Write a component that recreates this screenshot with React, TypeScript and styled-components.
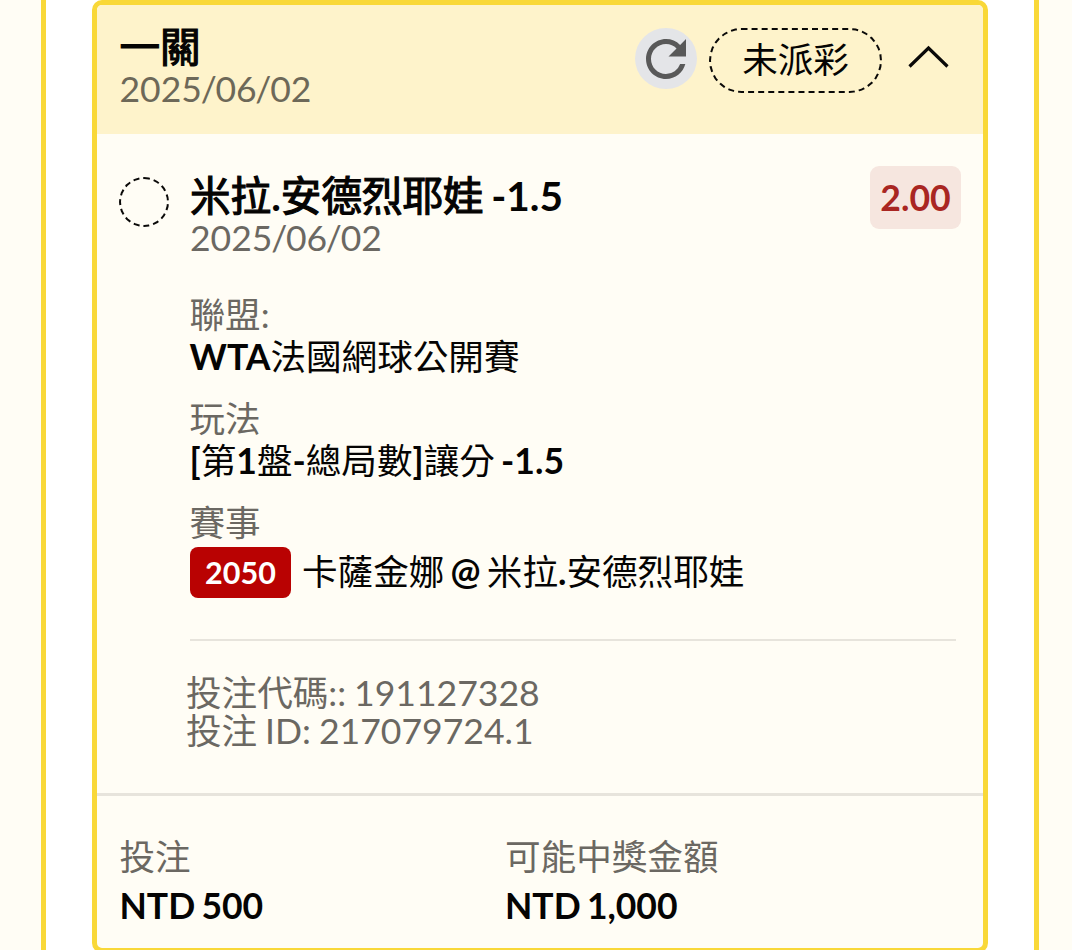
import { Fragment } from "react";
import styled, { createGlobalStyle } from "styled-components";

const GlobalStyle = createGlobalStyle`
  *, *::before, *::after {
    box-sizing: border-box;
  }

  body {
    margin: 0;
    overflow: hidden;
    background: #fffdf5;
    color: #050403;
    font-family: Lato, "Noto Sans CJK TC", sans-serif;
    font-size: 35.6px;
    word-spacing: -2.4px;
  }
`;

const Page = styled.main`
  height: 950px;
  overflow: hidden;
  padding: 0 33px 0 41px;
`;

const Panel = styled.div`
  height: 1000px;
  background: #fff;
  border: 5px solid #f9d838;
  border-width: 0 5px;
  padding: 0 46px;
`;

const Card = styled.article`
  height: 953px;
  background: #fffdf5;
  border: 5px solid #f9d838;
  border-radius: 10px;
  overflow: hidden;
`;

const Header = styled.header`
  display: flex;
  align-items: flex-start;
  height: 129px;
  padding: 20px 33px 0 22.5px;
  background: #fef3cb;
`;

const Title = styled.h2`
  height: 43px;
  margin: 0;
  font-size: 40.6px;
  font-weight: 400;
  line-height: 43px;
  white-space: nowrap;
  -webkit-text-stroke: 1.2px currentColor;
`;

const DateLine = styled.div<{ $tone?: string }>`
  height: 42px;
  font-size: 35.5px;
  line-height: 42px;
  color: ${({ $tone }) => $tone || "#6b6862"};
`;

const Slash = styled.span`
  margin: 0 -1.25px;
`;

const Grow = styled.div`
  flex: 1;
`;

const RefreshButton = styled.button`
  display: flex;
  align-items: center;
  justify-content: center;
  width: 62px;
  height: 61px;
  margin: 3px 12px 0 0;
  padding: 0;
  border: 0;
  border-radius: 50%;
  background: #e4e5e8;
  color: #595959;
`;

const StatusPill = styled.div`
  width: 173px;
  height: 65px;
  margin: 3px 24px 0 0;
  border: 2px dashed #0a0908;
  border-radius: 33px;
  line-height: 60px;
  text-align: center;
`;

const Toggle = styled.button`
  display: flex;
  margin: 18px 0 0;
  padding: 0;
  border: 0;
  background: none;
  color: #0a0908;
`;

const Leg = styled.section`
  display: flex;
  align-items: flex-start;
  height: 659px;
  padding: 32px 22px 0;
`;

const StatusDot = styled.div`
  width: 50px;
  height: 50px;
  margin: 11px 21px 0 0;
  border: 2px dashed #0a0908;
  border-radius: 50%;
`;

const LegBody = styled.div`
  flex: 1;
  min-width: 0;
`;

const LegTop = styled.div`
  display: flex;
  justify-content: space-between;
  height: 128px;
`;

const LegHeading = styled.div`
  padding-top: 7.5px;
`;

const Odds = styled.div`
  width: 91px;
  height: 63px;
  border-radius: 9px;
  background: #f6e6df;
  color: #a92622;
  font-weight: 700;
  line-height: 63px;
  text-align: center;
`;

const Fields = styled.dl`
  display: grid;
  gap: 20px;
  margin: 0 0 0 -0.5px;
`;

const Label = styled.dt`
  height: 42px;
  line-height: 42px;
  color: #6b6862;
`;

const Value = styled.dd`
  height: 42px;
  margin: 0;
  line-height: 42px;
  white-space: nowrap;
`;

const Strong = styled.span`
  font-weight: 700;
  -webkit-text-stroke: 0;
`;

const EventRow = styled(Value)`
  display: flex;
  align-items: flex-start;
  height: 51px;
  margin: 3px 0 0 0.5px;
  line-height: 49px;
`;

const EventCode = styled.span`
  width: 101px;
  height: 51px;
  margin-right: 11px;
  border-radius: 8px;
  background: #b90202;
  color: #fff;
  font-size: 30.5px;
  font-weight: 700;
  line-height: 51px;
  text-align: center;
`;

const Divider = styled.hr`
  height: 2px;
  margin: 41px 5px 0 0;
  border: 0;
  background: #e7e4dc;
`;

const Codes = styled.div`
  margin: 33px 0 0 -4px;
  color: #6b6862;
  word-spacing: -1.2px;
`;

const CodeLine = styled.div`
  height: 38px;
  line-height: 38px;
`;

const Footer = styled.footer`
  display: flex;
  height: 155px;
  padding: 40px 22.5px 0;
  border-top: 3px solid #e7e4dc;
`;

const Amount = styled.dl`
  width: 385.5px;
  margin: 0;
`;

const AmountValue = styled(Value)`
  margin-top: 7px;
  font-size: 35.5px;
  font-weight: 700;
`;

// Latin letters and digits are heavier than the Chinese text around them
const Mixed = ({ text }: { text: string }) => (
  <Fragment>
    {text
      .split(/([\x20-\x7e]+)/)
      .filter(Boolean)
      .map((part, i) =>
        /^[\x20-\x7e]/.test(part) ? (
          <Strong key={i}>{part}</Strong>
        ) : (
          <Fragment key={i}>{part}</Fragment>
        )
      )}
  </Fragment>
);

const DateText = ({ value, tone }: { value: string; tone?: string }) => (
  <DateLine $tone={tone}>
    {value.split("/").map((part, i) => (
      <Fragment key={i}>
        {i > 0 && <Slash>/</Slash>}
        {part}
      </Fragment>
    ))}
  </DateLine>
);

const RefreshIcon = () => (
  <svg width="60" height="60" viewBox="0 0 24 24" fill="currentColor">
    <path d="M17.65 6.35A7.958 7.958 0 0 0 12 4c-4.42 0-7.99 3.58-7.99 8s3.57 8 7.99 8c3.73 0 6.84-2.55 7.73-6h-2.08A5.99 5.99 0 0 1 12 18c-3.31 0-6-2.69-6-6s2.69-6 6-6c1.66 0 3.14.69 4.22 1.78L13 11h7V4l-2.35 2.35z" />
  </svg>
);

const ChevronIcon = () => (
  <svg width="44" height="30" viewBox="0 0 44 30" fill="none">
    <path d="M3.5 23.5 22.5 5 41.5 23.5" stroke="currentColor" strokeWidth="3.2" />
  </svg>
);

const amounts = [
  { label: "投注", value: "NTD 500" },
  { label: "可能中獎金額", value: "NTD 1,000" },
];

const App = () => {
  return (
    <Page>
      <GlobalStyle />
      <Panel>
        <Card>
          <Header>
            <div>
              <Title>一關</Title>
              <DateText value="2025/06/02" tone="#6d6858" />
            </div>
            <Grow />
            <RefreshButton aria-label="refresh">
              <RefreshIcon />
            </RefreshButton>
            <StatusPill>未派彩</StatusPill>
            <Toggle aria-label="toggle">
              <ChevronIcon />
            </Toggle>
          </Header>

          <Leg>
            <StatusDot />
            <LegBody>
              <LegTop>
                <LegHeading>
                  <Title>
                    <Mixed text="米拉.安德烈耶娃 -1.5" />
                  </Title>
                  <DateText value="2025/06/02" />
                </LegHeading>
                <Odds>2.00</Odds>
              </LegTop>
              <Fields>
                <div>
                  <Label>聯盟:</Label>
                  <Value>
                    <Mixed text="WTA法國網球公開賽" />
                  </Value>
                </div>
                <div>
                  <Label>玩法</Label>
                  <Value>
                    <Mixed text="[第1盤-總局數]讓分 -1.5" />
                  </Value>
                </div>
                <div>
                  <Label>賽事</Label>
                  <EventRow>
                    <EventCode>2050</EventCode>
                    <span>
                      <Mixed text="卡薩金娜 @ 米拉.安德烈耶娃" />
                    </span>
                  </EventRow>
                </div>
              </Fields>
              <Divider />
              <Codes>
                <CodeLine>投注代碼:: 191127328</CodeLine>
                <CodeLine>投注 ID: 217079724.1</CodeLine>
              </Codes>
            </LegBody>
          </Leg>

          <Footer>
            {amounts.map(({ label, value }) => (
              <Amount key={label}>
                <Label>{label}</Label>
                <AmountValue>{value}</AmountValue>
              </Amount>
            ))}
          </Footer>
        </Card>
      </Panel>
    </Page>
  );
};

export default App;
